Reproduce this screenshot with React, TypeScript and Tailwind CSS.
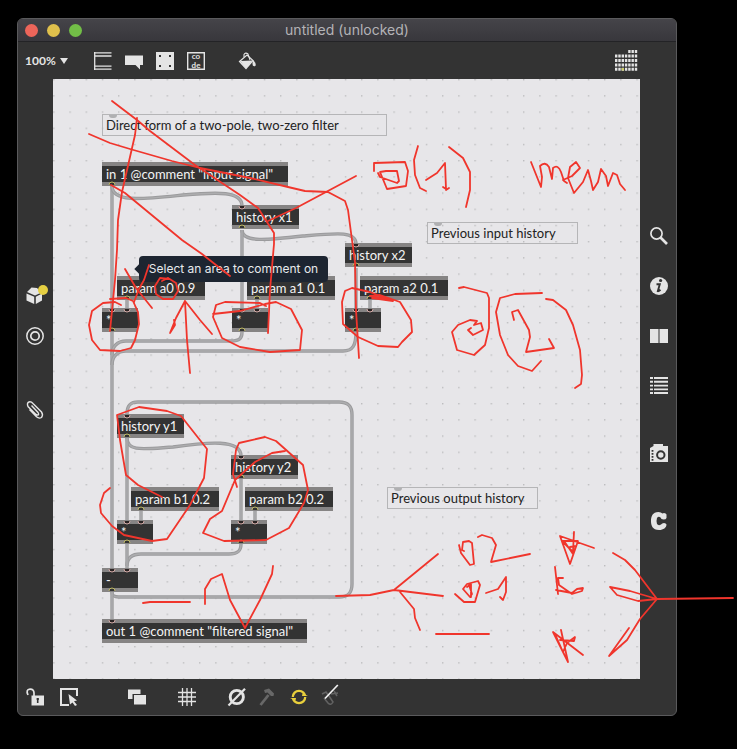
import React from "react";

type NodeKind = "object" | "comment";

interface PatchNode {
  id: string;
  text: string;
  kind: NodeKind;
  /** position and width on the patcher canvas */
  place: string;
}

const nodes: PatchNode[] = [
  { id: "c1", kind: "comment", text: "Direct form of a two-pole, two-zero filter", place: "left-[49px] top-[35px] w-[285px]" },
  { id: "c2", kind: "comment", text: "Previous input history", place: "left-[374px] top-[143px] w-[151px]" },
  { id: "c3", kind: "comment", text: "Previous output history", place: "left-[334px] top-[408px] w-[151px]" },
  { id: "in1", kind: "object", text: 'in 1 @comment "input signal"', place: "left-[49px] top-[83px] w-[186px]" },
  { id: "x1", kind: "object", text: "history x1", place: "left-[179px] top-[126px] w-[67px]" },
  { id: "x2", kind: "object", text: "history x2", place: "left-[292px] top-[164px] w-[67px]" },
  { id: "a0", kind: "object", text: "param a0 0.9", place: "left-[64px] top-[197px] w-[88px]" },
  { id: "a1", kind: "object", text: "param a1 0.1", place: "left-[194px] top-[197px] w-[88px]" },
  { id: "a2", kind: "object", text: "param a2 0.1", place: "left-[307px] top-[197px] w-[88px]" },
  { id: "m0", kind: "object", text: "*", place: "left-[49px] top-[229px] w-[36px]" },
  { id: "m1", kind: "object", text: "*", place: "left-[179px] top-[229px] w-[36px]" },
  { id: "m2", kind: "object", text: "*", place: "left-[292px] top-[229px] w-[36px]" },
  { id: "y1", kind: "object", text: "history y1", place: "left-[64px] top-[335px] w-[67px]" },
  { id: "y2", kind: "object", text: "history y2", place: "left-[178px] top-[376px] w-[67px]" },
  { id: "b1", kind: "object", text: "param b1 0.2", place: "left-[78px] top-[408px] w-[88px]" },
  { id: "b2", kind: "object", text: "param b2 0.2", place: "left-[192px] top-[408px] w-[88px]" },
  { id: "m3", kind: "object", text: "*", place: "left-[64px] top-[441px] w-[36px]" },
  { id: "m4", kind: "object", text: "*", place: "left-[178px] top-[441px] w-[36px]" },
  { id: "sub", kind: "object", text: "-", place: "left-[49px] top-[489px] w-[36px]" },
  { id: "out1", kind: "object", text: 'out 1 @comment "filtered signal"', place: "left-[49px] top-[540px] w-[205px]" },
];

const cords = [
  "M59 107V489",
  "M59 107C59 124 90 120 130 116C165 113 189 112 189 127",
  "M189 151C189 164 215 161 250 157C285 154 303 152 303 165",
  "M189 151V229",
  "M303 189V229",
  "M74 220V229",
  "M204 220V229",
  "M317 220V229",
  "M189 253C189 259 187 262 178 262H73C64 262 59 268 59 276",
  "M303 253C303 266 300 272 290 272H73C64 272 59 278 59 286",
  "M59 513C59 517 61 518 66 518H286C295 518 299 514 299 505V336C299 327 295 323 286 323H85C77 323 74 327 74 335",
  "M74 359C74 373 90 370 120 368C155 363 188 360 188 377",
  "M74 359V441",
  "M188 400V441",
  "M88 432V441",
  "M202 432V441",
  "M188 465C188 472 185 475 176 475H88C79 475 74 479 74 487",
  "M74 465V489",
  "M59 513V540",
];

const inlets: [number, number][] = [
  [189, 127], [303, 165], [59, 230], [74, 230], [189, 230], [204, 230], [303, 230], [317, 230],
  [74, 336], [188, 377], [74, 442], [88, 442], [188, 442], [202, 442], [59, 490], [74, 490], [59, 541],
];

const outlets: [number, number][] = [
  [59, 106], [189, 149], [303, 187], [74, 220], [204, 220], [317, 220], [59, 252], [189, 252], [303, 252],
  [74, 358], [188, 399], [88, 431], [202, 431], [74, 464], [188, 464], [59, 512],
];

const strokes = [
  "M112 101L137 120L150 131L195 165L240 195L258 208L274 233V244L270 290L268 333",
  "M89 134L110 143L130 149L172 161L200 168L250 178L288 187L305 191L328 192L345 201L348 210L352 240L355 262L356 310L359 358",
  "M137 118L135 135L122 192L118 220L117 250L115 280L110 331",
  "M111 185L125 193L182 240L202 254L230 276",
  "M356 176L326 192L296 208L268 221",
  "M125 269L136 288L152 308",
  "M149 265L144 280L139 289L134 302",
  "M162 281L168 278L176 283L178 291L173 299L163 299L156 294L155 286L160 278L169 279",
  "M110 299L126 298L133 301L138 312L139 324L135 340L131 348L120 351L100 350L92 340L89 325L92 311L103 303L115 302L121 305",
  "M185 301L187 340L190 373M185 301L176 318L170 333L175 325L174 320M185 301L200 320L212 334",
  "M213 314L240 311L265 304L276 302L291 309L302 330L300 350L270 352L240 347L222 338L213 317L216 305L225 302L260 303L266 306",
  "M393 300L370 296L380 295L400 302L411 320L412 332L402 342L398 347L378 346L358 337L343 324L342 302L345 291L352 288L370 292L393 301L372 298",
  "M374 171V163L405 162L408 171L406 186L387 189L380 172L386 171H397L399 181L397 183L380 177L378 173",
  "M418 146L414 160L415 175L420 188L426 191",
  "M426 180L437 173L445 163L446 189L443 187M446 190L449 188",
  "M449 147L463 158L470 172V190L466 207",
  "M531 162L535 172L541 187L542 177L540 166Q545 161 549 167L552 179L553 168Q558 164 561 172L564 181L567 183",
  "M563 180L572 176L580 168L576 162L570 167L568 178L574 193L583 182L588 170L591 181L593 190L598 182L601 169L606 176L608 186L613 173L617 175L620 184L625 190",
  "M459 288L464 287L487 293L489 298V328L485 345L474 355L457 350L452 332L458 325L470 320L477 321L474 325L481 323L483 330L473 335L468 330L471 328",
  "M542 293L515 294L500 298L496 312L500 335L508 355L518 366L532 371L541 361",
  "M514 320L512 312L518 310L529 330L530 337L526 352L554 348L549 339",
  "M546 299L553 300L566 310L573 325L580 350L582 375L581 384L575 388",
  "M162 497L138 485L126 475L120 440L117 415L139 407L167 411L181 416L207 449L204 478L190 505L167 539L152 541L124 535L112 526L101 513L100 505L104 493L110 488",
  "M237 487L233 474L236 450L239 443L265 437L276 441L303 465L308 490L304 503L289 528L266 540L224 541L203 533L210 519L222 511L235 480L255 462L272 453L285 451",
  "M143 603L150 602H190",
  "M205 604V589L211 579L222 574L230 600L245 628L260 600L272 574L273 566",
  "M336 596L370 595L394 590L438 554M394 590L443 596M400 592L414 609L415 618L420 630",
  "M436 634H489",
  "M459 545L461 553L470 565L474 564L472 543L469 541L463 542L462 550L464 551",
  "M478 537L482 535L492 538L496 545L491 562L530 554",
  "M455 594L464 602H475L480 585L478 581L467 584L463 589L470 597L472 594L469 585M467 587L471 584V597",
  "M486 593L498 589L506 577V592L503 600L500 597",
  "M594 548L560 536L570 564L578 541L562 541L573 552L574 532M564 541L573 554L576 546L570 547",
  "M555 567L558 594M563 578H558L559 585L572 594L582 591L583 588L577 589L572 593L556 590",
  "M561 630L568 662L553 632L583 655M560 640L574 641L575 637L567 643L563 652L555 634",
  "M613 553L625 560L635 570L657 599L630 591L610 587L617 595L638 601L657 599L733 598M657 599L640 619L627 640L609 656L629 628",
];

function PatcherNode({ node }: { node: PatchNode }) {
  if (node.kind === "comment") {
    return (
      <div className={`absolute h-[22px] border border-[#b5b5b7] pl-[3px] text-[#222] ${node.place}`}>
        <span className="absolute left-1.5 top-0 h-[3px] w-2 rounded-b-full bg-[#b0b0b2]" />
        <p className="whitespace-nowrap leading-5">{node.text}</p>
      </div>
    );
  }
  return (
    <div className={`absolute h-6 border-y-4 border-[#868484] bg-[#333] pl-1 text-[#f4f4f4] ${node.place}`}>
      <p className="whitespace-nowrap leading-4">{node.text}</p>
    </div>
  );
}

interface IconButtonProps {
  label: string;
  className?: string;
  color?: string;
  children: React.ReactNode;
}

function IconButton({ label, className = "", color = "text-[#e4e4e4]", children }: IconButtonProps) {
  return (
    <button type="button" aria-label={label} className={`block size-[18px] shrink-0 ${color} ${className}`}>
      <svg viewBox="0 0 18 18" className="size-full overflow-visible" fill="none" stroke="currentColor">
        {children}
      </svg>
    </button>
  );
}

function TitleBar() {
  return (
    <header className="flex h-[23px] items-center border-b border-[#232326] bg-linear-to-b from-[#454449] to-[#38373c] px-[7px]">
      <div className="flex flex-1 gap-[9px]">
        <button type="button" aria-label="Close" className="size-[13px] rounded-full bg-[#ed655a]" />
        <button type="button" aria-label="Minimize" className="size-[13px] rounded-full bg-[#e0c04c]" />
        <button type="button" aria-label="Zoom" className="size-[13px] rounded-full bg-[#72be47]" />
      </div>
      <h1 className="font-['Inter',sans-serif] text-sm text-[#b4b3b7]">untitled (unlocked)</h1>
      <div className="flex-1" />
    </header>
  );
}

function TopToolbar() {
  return (
    <div className="flex h-[37px] items-center pl-[7px] pr-[38px]">
      <div className="relative flex w-[69px] items-center">
        <select
          aria-label="Zoom level"
          className="w-14 appearance-none bg-transparent text-xs font-bold text-[#e4e4e4]"
          defaultValue="100%"
        >
          <option>100%</option>
          <option>75%</option>
        </select>
        <svg viewBox="0 0 8 6" className="pointer-events-none absolute left-[35px] h-1.5 w-2" fill="#e4e4e4">
          <path d="M0 0H8L4 6Z" />
        </svg>
      </div>
      <div className="flex gap-[13px]">
        <IconButton label="Object">
          <path d="M.7 0V18M0 .8H17.500M1 4H17.500M1 14.200H17.500M0 17.200H17.500" strokeWidth="1.300" />
        </IconButton>
        <IconButton label="Comment">
          <path d="M0 3.500H18V13H15V17.500L10.500 13H0Z" fill="currentColor" stroke="none" />
        </IconButton>
        <IconButton label="Panel">
          <path d="M0 0H18V18H0Z" fill="currentColor" stroke="none" />
          <path d="M3 4H5M13 4H15M3 14H5M13 14H15" stroke="#333" strokeWidth="2" />
        </IconButton>
        <IconButton label="Code box">
          <path d="M.7.7H17.300V17.300H.7Z" strokeWidth="1.400" />
          <text x="9" y="7" textAnchor="middle" fontSize="8" fontWeight="700" fill="currentColor" stroke="none">co</text>
          <text x="9" y="16" textAnchor="middle" fontSize="8" fontWeight="700" fill="currentColor" stroke="none">de</text>
        </IconButton>
      </div>
      <IconButton label="Format" className="ml-[33px]">
        <path d="M1.500 9.500L9 3L15 8.500L8 16.500Z" strokeWidth="1.200" />
        <path d="M2 9L14.500 8.500L8 16.500Z" fill="currentColor" stroke="none" />
        <path d="M6 5V2.500Q7.500 0 10 2L12 8" strokeWidth="1.100" />
        <path d="M15 8Q18.500 11 17.500 13.800Q16 15 14.800 13.500Q14.200 11 15 8Z" fill="currentColor" stroke="none" />
      </IconButton>
      <button type="button" aria-label="Object browser" className="ml-auto h-[21px] w-[23px]">
        <svg viewBox="0 0 23 21" className="size-full" stroke="#e4e4e4" fill="none">
          <path d="M13.200 1.500H23" strokeWidth="3" strokeDasharray="2.400 .9" />
          <path d="M0 6H23M0 10.500H23M0 15H23M0 19.300H23" strokeWidth="3" strokeDasharray="2.400 .9" />
          <path d="M6.600 19.300H9" stroke="#cfcf68" strokeWidth="2.500" />
        </svg>
      </button>
    </div>
  );
}

function LeftSidebar() {
  return (
    <nav aria-label="Browser" className="flex w-[35px] shrink-0 flex-col items-start pl-2 pt-[207px]">
      <IconButton label="Packages">
        <path d="M1 6L5.500 1.500L11 2L15.500 6.500L9 9.500ZM.5 7.500L8.200 10.800V18L.5 14.500ZM9.800 10.800L16 7.500V14.500L9.800 18Z" fill="currentColor" stroke="none" />
        <circle cx="17" cy="4" r="5" fill="#e5cf42" stroke="none" />
      </IconButton>
      <IconButton label="Snippets" className="mt-[23px]">
        <circle cx="9" cy="9" r="8.200" strokeWidth="1.500" />
        <circle cx="9" cy="9" r="4.200" strokeWidth="1.700" />
      </IconButton>
      <IconButton label="Attachments" className="mt-[56px]">
        <path d="M5.500 4.500L12 11.500Q13.500 14 11.500 14Q10.500 14 9.500 13L2 5.500Q.5 2 3 1Q5 .3 7 2.500L15.500 11Q17.500 14 15.500 16.500Q13 18 10.500 15.800L3.500 8.500" strokeWidth="1.400" />
      </IconButton>
    </nav>
  );
}

function RightSidebar() {
  return (
    <nav aria-label="Inspector" className="flex w-9 shrink-0 flex-col items-end pr-2 pt-[148px]">
      <IconButton label="Search">
        <circle cx="6.500" cy="6.500" r="5.600" strokeWidth="1.700" />
        <path d="M10.500 10.500L17 17" strokeWidth="2.600" />
      </IconButton>
      <IconButton label="Inspector" className="mt-[32px]">
        <circle cx="9" cy="9" r="9" fill="currentColor" stroke="none" />
        <path d="M6.500 7.200H9.800L7.800 14.200Q8.500 14.500 10.500 12.800" stroke="#333" strokeWidth="1.900" />
        <circle cx="10.600" cy="3.500" r="1.600" fill="#333" stroke="none" />
      </IconButton>
      <IconButton label="Reference" className="mt-[32px]">
        <path d="M0 2H8.500V16H0ZM9.500 2H18V16H9.500Z" fill="currentColor" stroke="none" />
      </IconButton>
      <IconButton label="Console" className="mt-[31px]">
        <path d="M0 2H3M4 2H18M0 5.800H3M4 5.800H18M0 9.600H3M4 9.600H18M0 13.400H3M4 13.400H18M0 17H3M4 17H18" strokeWidth="1.900" />
      </IconButton>
      <IconButton label="Snapshots" className="mt-[50px]">
        <path d="M3.500 0H13V2H18V18H0V4L3.500 2Z" fill="currentColor" stroke="none" />
        <circle cx="10.800" cy="11" r="3.700" stroke="#333" strokeWidth="2" />
        <path d="M2.500 6V17" stroke="#333" strokeWidth="1.800" strokeDasharray="1.800 1.200" />
      </IconButton>
      <IconButton label="Cycling" className="mt-[50px]">
        <path
          d="M8.500 0C2.500 0 1 4.500 1 9S2.500 18 9 18C13.500 18 16.500 15.500 16.500 12.500Q16 11 14 11T11 12.500Q8.500 14 7 12Q6 9 7 6Q8.500 4 10.500 5.500Q11 7.500 13.500 7.500T16.500 6V2.500Q16 1 14 1L12.500 1.500Q11 0 8.500 0Z"
          fill="currentColor"
          stroke="none"
        />
      </IconButton>
    </nav>
  );
}

function BottomToolbar() {
  return (
    <footer className="flex h-9 items-center px-2">
      <IconButton label="Unlock patcher">
        <path d="M2 7Q-.5 1.500 4 1.200Q8 1 8 5V8" strokeWidth="1.700" />
        <path d="M5.500 7.500H18V17.500H5.500Z" fill="currentColor" stroke="none" />
        <path d="M11.700 10V15M10.500 11H13" stroke="#333" strokeWidth="1.600" />
      </IconButton>
      <IconButton label="Select" className="ml-4">
        <path d="M17 8V1H1V17H9" strokeWidth="2" />
        <path d="M8.500 6L17 12.500L14 13.200L17 17L15 18L12.500 14.500L10 16.500Z" fill="currentColor" stroke="none" />
      </IconButton>
      <IconButton label="Presentation" className="ml-[50px]">
        <path d="M0 1.500H12.500V6H4.500V11H0ZM6 7H18V16.500H6Z" fill="currentColor" stroke="none" />
      </IconButton>
      <IconButton label="Grid" className="ml-8">
        <path d="M4.500 0V18M9 0V18M13.500 0V18M0 4.500H18M0 9H18M0 13.500H18" strokeWidth="1.300" />
      </IconButton>
      <IconButton label="Mute" className="ml-8">
        <circle cx="8.800" cy="9" r="6.600" strokeWidth="2.900" />
        <path d="M.5 17.500L17 .8" strokeWidth="2.200" />
      </IconButton>
      <IconButton label="Debug" className="ml-[13px]" color="text-[#686868]">
        <path d="M1.500 17L9.500 7" strokeWidth="2.800" />
        <path d="M5 2L10 .5L15 5.500L14.500 8L12 8L8.500 4.500L6 5Z" fill="currentColor" stroke="none" />
      </IconButton>
      <IconButton label="Auto compile" className="ml-[13px]" color="text-[#e8cf3c]">
        <circle cx="9" cy="9" r="6.200" strokeWidth="2.300" />
        <path d="M0 9.500H6M12 8.500H18" stroke="#333" strokeWidth="1.200" />
        <path d="M12.500 5.500L18 8H12ZM5.500 12.500L0 10H6Z" fill="currentColor" stroke="none" />
      </IconButton>
      <IconButton label="Quick tools" className="ml-[13px]">
        <path d="M1 6L5 4L8 8L12 14Q10 18 7 15L3 10M10 6L17 5M13 3L16 8" stroke="#626262" strokeWidth="1.600" />
        <path d="M4 10.500L16.800-3" stroke="#f2f2f2" strokeWidth="1.700" />
      </IconButton>
    </footer>
  );
}

function Patcher() {
  return (
    <main className="relative min-h-[600px] flex-1 overflow-hidden bg-[#e7e6e9]">
      <svg className="absolute inset-0 size-full" aria-hidden="true">
        <defs>
          <pattern id="dots" width="16.200" height="16.200" x=".2" y="0" patternUnits="userSpaceOnUse">
            <rect width="1.400" height="1.400" fill="#bcbcbe" />
          </pattern>
        </defs>
        <rect width="100%" height="100%" fill="url(#dots)" />
        {cords.map((d) => (
          <g key={d} fill="none">
            <path d={d} stroke="#9b9b9d" strokeWidth="3.400" />
            <path d={d} stroke="#adadaf" strokeWidth="1.400" />
          </g>
        ))}
      </svg>
      {nodes.map((n) => (
        <PatcherNode key={n.id} node={n} />
      ))}
      <svg className="absolute inset-0 size-full" aria-hidden="true">
        {inlets.map(([x, y]) => (
          <path key={`i${x}-${y}`} d={`M${x - 3} ${y}a3 3 0 0 0 6 0`} fill="#2a2424" stroke="#d3aaa6" />
        ))}
        {outlets.map(([x, y]) => (
          <path key={`o${x}-${y}`} d={`M${x - 3} ${y}a3 3 0 0 1 6 0`} fill="#333" stroke="#bfb964" />
        ))}
      </svg>
      <div
        role="tooltip"
        className="absolute left-[86px] top-[177px] w-[189px] rounded-sm bg-[#1d2531] py-[3px] text-center font-['Inter',sans-serif] text-xs leading-5 whitespace-nowrap text-[#e8eaed]"
      >
        <span className="absolute -left-[3px] top-[9px] size-2 rotate-45 bg-[#1d2531]" />
        <span className="relative">Select an area to comment on</span>
      </div>
    </main>
  );
}

export default function App() {
  return (
    <div className="relative min-h-screen overflow-hidden bg-black pb-[33px] pl-[17px] pr-[60px] pt-[18px] font-['Lato',sans-serif] text-[13px]">
      <div className="flex flex-col overflow-hidden rounded-md border border-[#5a5a5c] bg-[#333]">
        <TitleBar />
        <TopToolbar />
        <div className="flex">
          <LeftSidebar />
          <Patcher />
          <RightSidebar />
        </div>
        <BottomToolbar />
      </div>
      <svg
        viewBox="0 0 737 749"
        className="pointer-events-none absolute left-0 top-0 h-[749px] w-[737px]"
        fill="none"
        stroke="#f0352c"
        strokeWidth="1.800"
        strokeLinecap="round"
        strokeLinejoin="round"
        aria-hidden="true"
      >
        {strokes.map((d) => (
          <path key={d} d={d} />
        ))}
      </svg>
    </div>
  );
}
